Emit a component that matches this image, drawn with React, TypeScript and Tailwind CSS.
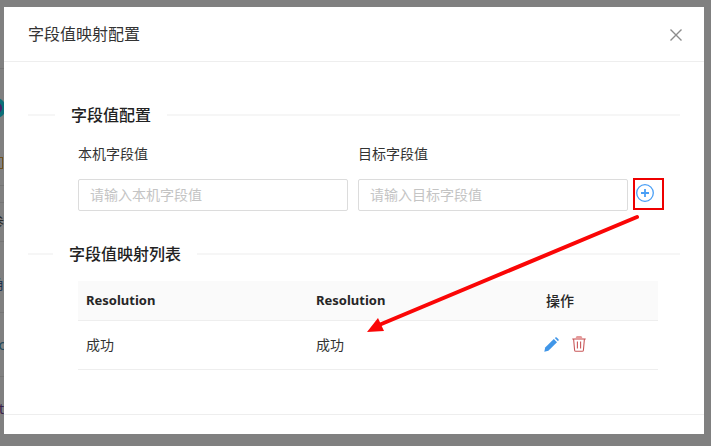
import React from "react";

const cjk = "font-['Noto_Sans','Noto_Sans_CJK_SC',sans-serif]";

function Section({ title, leftW, gap }: { title: string; leftW: string; gap: string }) {
  return (
    <div className={`flex items-center ${gap}`}>
      <div className={`h-[2px] bg-[#f6f6f6] ${leftW}`} />
      <span className="text-[16px] leading-[20px] font-medium text-[#222]">{title}</span>
      <div className="h-[2px] flex-1 bg-[#f6f6f6]" />
    </div>
  );
}

function Field({ label, placeholder }: { label: string; placeholder: string }) {
  return (
    <div className="w-[270px]">
      <div className="h-[20px] text-[14px] leading-[20px] text-[#333]">{label}</div>
      <div className="mt-[15px] flex h-[32px] items-center rounded-[2px] border border-[#dcdcdc] bg-white pb-[2px] pl-[11px] text-[14px] text-[#c4c4c4]">
        {placeholder}
      </div>
    </div>
  );
}

export default function App() {
  return (
    <div className={`relative h-[446px] w-[711px] overflow-hidden bg-[#808080] ${cjk}`}>
      <div className="absolute left-0 top-[68px] h-px w-[4px] bg-[#747474]" />
      <div className="absolute left-[-14px] top-[98px] h-[20px] w-[20px] rounded-full border-[4px] border-[#0c6f78] bg-[#4b1f6b]" />
      <div className="absolute left-[-6px] top-[157px] h-[12px] w-[9px] border border-[#6e5220]" />
      <div className="absolute left-0 top-[185px] h-px w-[4px] bg-[#757575]" />
      <div className="absolute left-0 top-[202px] h-px w-[4px] bg-[#757575]" />
      <div className="absolute left-0 top-[241px] h-px w-[4px] bg-[#757575]" />
      <div className="absolute left-0 top-[312px] h-px w-[4px] bg-[#757575]" />
      <div className="absolute left-0 top-[376px] h-px w-[4px] bg-[#757575]" />
      <span className="absolute left-[-10px] top-[212px] text-[14px] leading-[20px] text-[#2a2a2a]">参</span>
      <span className="absolute left-[-10px] top-[274px] text-[14px] leading-[20px] text-[#1d3350]">角</span>
      <span className="absolute left-[-5px] top-[335px] text-[14px] leading-[20px] text-[#1f4a5c]">ic</span>
      <span className="absolute left-[-1px] top-[399px] text-[14px] leading-[20px] text-[#3a1f4a]">t</span>

      <div className="absolute left-[4px] top-[7px] flex h-[427px] w-[700px] flex-col bg-white">
        <div className="flex h-[55px] shrink-0 items-center justify-between border-b border-[#eeeeee] pl-[24px] pr-[22px]">
          <span className="text-[16px] leading-[22px] text-[#333]">字段值映射配置</span>
          <svg width="12" height="12" viewBox="0 0 12 12" className="mt-px">
            <path d="M0.5 0.5 L11.5 11.5 M11.5 0.5 L0.5 11.5" stroke="#8c8c8c" strokeWidth="1.4" fill="none" />
          </svg>
        </div>

        <div className="flex flex-1 flex-col pl-[24px] pr-[24px] pt-[43px]">
          <Section title="字段值配置" leftW="w-[27px]" gap="gap-x-4" />

          <div className="mt-[19px] flex pl-[50px]">
            <Field label="本机字段值" placeholder="请输入本机字段值" />
            <div className="ml-[10px]">
              <Field label="目标字段值" placeholder="请输入目标字段值" />
            </div>
            <div className="ml-[5px] mt-[34px] flex h-[32px] w-[31px] items-center border-[2px] border-[#ee0000] pb-[2px] pl-px">
              <svg width="18" height="18" viewBox="0 0 18 18">
                <circle cx="9" cy="9" r="8.3" fill="none" stroke="#4a9ff5" strokeWidth="1.3" />
                <path d="M5 9 H13 M9 5 V13" stroke="#4a9ff5" strokeWidth="1.8" />
              </svg>
            </div>
          </div>

          <div className="mt-[33px]">
            <Section title="字段值映射列表" leftW="w-[25px]" gap="gap-x-4" />
          </div>

          <div className="ml-[50px] mt-[17px] w-[580px] text-[13px] text-[#333]">
            <div className="grid h-[40px] grid-cols-[230px_230px_120px] items-center border-b border-[#eeeeee] bg-[#fafafa] font-bold text-[#262626]">
              <span className="pl-2 pt-px">Resolution</span>
              <span className="pl-2 pt-px">Resolution</span>
              <span className="pl-2 text-[14px] font-medium">操作</span>
            </div>
            <div className="grid h-[49px] grid-cols-[230px_230px_120px] items-center border-b border-[#eeeeee] pb-[2px] text-[14px]">
              <span className="pl-2">成功</span>
              <span className="pl-2">成功</span>
              <div className="flex items-center gap-[13px] pl-[6px]">
                <svg width="15" height="15" viewBox="0 0 15 15">
                  <path d="M0.3 14.7 L1.2 10.6 L9.8 2 L13 5.2 L4.4 13.8 Z" fill="#4096e8" />
                  <path d="M10.8 1 L11.4 0.5 Q12 0 12.7 0.5 L14.5 2.3 Q15 3 14.5 3.6 L14 4.2 Z" fill="#4096e8" />
                </svg>
                <svg width="14" height="16" viewBox="0 0 14 16" fill="none" stroke="#c9585a" strokeWidth="1.1">
                  <path d="M0.3 3 H13.7" />
                  <path d="M4 2.6 L4.6 1 Q4.8 0.6 5.4 0.6 H8.6 Q9.2 0.6 9.4 1 L10 2.6 Z" fill="#e59a9a" stroke="#e59a9a" />
                  <path d="M1.6 3 L2.6 14.2 Q2.7 15.3 3.8 15.3 H10.2 Q11.3 15.3 11.4 14.2 L12.4 3" />
                  <path d="M5.4 5.5 V12.5 M8.6 5.5 V12.5" />
                </svg>
              </div>
            </div>
          </div>
        </div>

        <div className="h-[20px] shrink-0 border-t border-[#eeeeee]" />
      </div>

      <svg className="absolute left-0 top-0" width="711" height="446" viewBox="0 0 711 446">
        <path d="M637 217 L379 325" stroke="#fa0606" strokeWidth="4" strokeLinecap="round" fill="none" />
        <path d="M367 332 L378 318 L384 331 Z" fill="#fa0606" />
      </svg>
    </div>
  );
}
